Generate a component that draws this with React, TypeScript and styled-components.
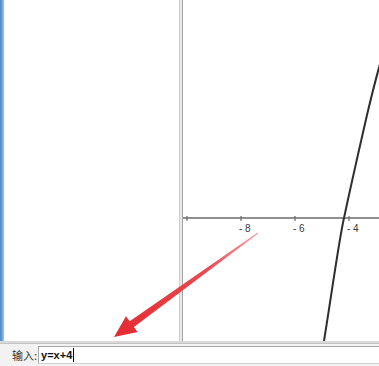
import React from "react";
import styled, { createGlobalStyle } from "styled-components";

const Global = createGlobalStyle`
  html, body { margin: 0; padding: 0; background: #ffffff; overflow: hidden; }
  #root { width: 379px; height: 366px; }
`;

const Window = styled.div`
  position: relative;
  width: 379px;
  height: 366px;
  display: flex;
  flex-direction: column;
  background: #ffffff;
  font-family: "Liberation Sans", Arial, sans-serif;
`;

const Views = styled.div`
  height: 341px;
  display: flex;
  flex-direction: row;
`;

const FrameEdge = styled.div`
  width: 4px;
  background: linear-gradient(to right, #4f86c6 0px, #6fa0d6 2px, #a9c8ea 4px);
`;

const AlgebraView = styled.div`
  width: 175px;
  background: #ffffff;
`;

const Splitter = styled.div`
  width: 2px;
  background: #e8e8e8;
  border-left: 1px solid #cfcfcf;
  border-right: 1px solid #a4a4a4;
`;

const GraphicsView = styled.div`
  flex: 1;
  background: #ffffff;
  position: relative;
  overflow: hidden;
`;

const Separator = styled.div`
  height: 2px;
  background: #d9d9d9;
  border-bottom: 1px solid #c4c4c4;
`;

const InputBar = styled.div`
  flex: 1;
  display: flex;
  align-items: stretch;
  background: #f2f2f2;
  padding: 2px 0 2px 12px;
`;

const Label = styled.span`
  display: flex;
  align-items: center;
  flex-shrink: 0;
  white-space: nowrap;
  font-family: "Noto Sans CJK SC", "Liberation Sans", sans-serif;
  font-size: 11px;
  color: #333333;
  margin-right: 1px;
`;

const InputField = styled.div`
  flex: 1;
  display: flex;
  align-items: center;
  background: #ffffff;
  border-top: 1px solid #a8a8a8;
  border-left: 1px solid #a8a8a8;
  border-bottom: 1px solid #d0d0d0;
  padding-left: 2px;
`;

const InputText = styled.span`
  font-family: "Liberation Sans", Arial, sans-serif;
  font-weight: bold;
  font-size: 11px;
  color: #111111;
`;

const Caret = styled.span`
  display: inline-block;
  width: 1px;
  height: 14px;
  background: #000000;
  margin-left: 1px;
`;

const Overlay = styled.svg`
  position: absolute;
  left: 0;
  top: 0;
  pointer-events: none;
`;

const ticks = [
  { x: 4, label: "" },
  { x: 58, label: "8" },
  { x: 112, label: "6" },
  { x: 166, label: "4" },
];

function Graph() {
  return (
    <svg width="196" height="341" style={{ display: "block" }}>
      <line x1="0" y1="218" x2="196" y2="218" stroke="#6a6a6a" strokeWidth="1.4" />
      {ticks.map((t) => (
        <g key={t.x}>
          <line x1={t.x} y1="216" x2={t.x} y2="221" stroke="#6a6a6a" strokeWidth="1.2" />
          {t.label && (
            <text
              x={t.x - 2}
              y="232"
              fontFamily="'Liberation Sans', Arial, sans-serif"
              fontSize="10"
              fill="#3a3a3a"
            >
              {"- " + t.label}
            </text>
          )}
        </g>
      ))}
      <path
        d="M141 341 C150 285 156 240 161 218 C168 185 176 150 184 115 C188 98 192 82 197 64"
        fill="none"
        stroke="#2e2e2e"
        strokeWidth="2"
      />
    </svg>
  );
}

function Arrow() {
  return (
    <Overlay width="379" height="366">
      <defs>
        <linearGradient id="arrowFade" x1="258" y1="233" x2="114" y2="337" gradientUnits="userSpaceOnUse">
          <stop offset="0" stopColor="#f4a0a4" />
          <stop offset="0.35" stopColor="#ea4a50" />
          <stop offset="1" stopColor="#e42a30" />
        </linearGradient>
      </defs>
      <polygon
        points="258.3,233.4 133.9,327.0 137.6,332.0 114,337 126.0,316.3 129.7,321.2 257.7,232.6"
        fill="url(#arrowFade)"
      />
    </Overlay>
  );
}

export default function App() {
  return (
    <>
      <Global />
      <Window>
        <Views>
          <FrameEdge />
          <AlgebraView />
          <Splitter />
          <GraphicsView>
            <Graph />
          </GraphicsView>
        </Views>
        <Separator />
        <InputBar>
          <Label>输入:</Label>
          <InputField>
            <InputText>y=x+4</InputText>
            <Caret />
          </InputField>
        </InputBar>
        <Arrow />
      </Window>
    </>
  );
}
